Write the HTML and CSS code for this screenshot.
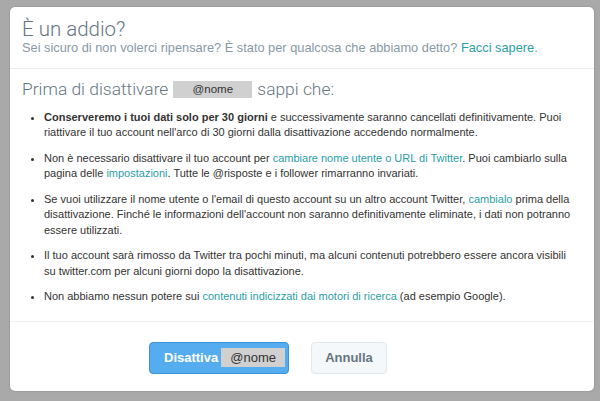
FILE: index.html
```html
<!DOCTYPE html>
<html lang="it">
<head>
<meta charset="utf-8">
<link rel="stylesheet" href="styles.css">
</head>
<body>
<div class="modal">
  <div class="header">
    <h1 class="title">È un addio?</h1>
    <p class="subtitle">Sei sicuro di non volerci ripensare? È stato per qualcosa che abbiamo detto? <a class="link">Facci sapere</a>.</p>
  </div>
  <div class="content">
    <h2 class="heading">Prima di disattivare <span class="namebox">@nome</span> sappi che:</h2>
    <ul class="list">
      <li><b>Conserveremo i tuoi dati solo per 30 giorni</b> e successivamente saranno cancellati definitivamente. Puoi riattivare il tuo account nell'arco di 30 giorni dalla disattivazione accedendo normalmente.</li>
      <li>Non è necessario disattivare il tuo account per <a class="link">cambiare nome utente o URL di Twitter</a>. Puoi cambiarlo sulla pagina delle <a class="link">impostazioni</a>. Tutte le @risposte e i follower rimarranno invariati.</li>
      <li>Se vuoi utilizzare il nome utente o l'email di questo account su un altro account Twitter, <a class="link">cambialo</a> prima della disattivazione. Finché le informazioni dell'account non saranno definitivamente eliminate, i dati non potranno essere utilizzati.</li>
      <li>Il tuo account sarà rimosso da Twitter tra pochi minuti, ma alcuni contenuti potrebbero essere ancora visibili su twitter.com per alcuni giorni dopo la disattivazione.</li>
      <li>Non abbiamo nessun potere sui <a class="link">contenuti indicizzati dai motori di ricerca</a> (ad esempio Google).</li>
    </ul>
  </div>
  <div class="footer">
    <button class="btn btn-primary">Disattiva <span class="btn-name">@nome</span></button>
    <button class="btn btn-secondary">Annulla</button>
  </div>
</div>
</body>
</html>
```

FILE: styles.css
```css
html, body {
  margin: 0;
  padding: 0;
}
body {
  background: #a9a9a9;
  width: 600px;
  height: 401px;
  overflow: hidden;
  padding: 7px 6px 0 10px;
  box-sizing: border-box;
  font-family: "Liberation Sans", Arial, sans-serif;
}
.modal {
  width: 584px;
  height: 384px;
  background: #fff;
  border-radius: 5px;
  box-shadow: 0 0 2px rgba(0,0,0,0.25);
  display: flex;
  flex-direction: column;
}
.header {
  height: 62px;
  box-sizing: border-box;
  padding: 11px 12px 0 12px;
  border-bottom: 1px solid #e8edf0;
}
.title {
  margin: 0;
  font-family: Roboto, "Liberation Sans", sans-serif;
  font-weight: 300;
  font-size: 20.5px;
  line-height: 22px;
  color: #66757f;
}
.subtitle {
  margin: 0;
  font-size: 12.8px;
  line-height: 16px;
  color: #8899a6;
}
.link {
  color: #2b9ea6;
  text-decoration: none;
}
.content {
  flex: 1;
  padding: 9px 12px 0 12px;
  border-bottom: 1px solid #eef1f3;
}
.heading {
  margin: 0;
  font-family: Roboto, "Liberation Sans", sans-serif;
  font-weight: 300;
  font-size: 17.4px;
  line-height: 22px;
  color: #66757f;
  display: flex;
  align-items: center;
}
.namebox {
  display: inline-block;
  background: #d0d0d0;
  color: #333;
  font-family: "Liberation Sans", Arial, sans-serif;
  font-weight: 400;
  font-size: 11.5px;
  width: 79px;
  height: 17px;
  line-height: 17px;
  text-align: center;
  margin: 0 5px;
}
.list {
  margin: 9.5px 0 0 0;
  padding: 0 4px 0 22px;
  font-size: 11px;
  line-height: 15.5px;
  color: #333;
}
.list li {
  margin-bottom: 10px;
}
.footer {
  height: 69px;
  box-sizing: border-box;
  display: flex;
  align-items: center;
  padding: 2px 0 0 139px;
  gap: 22px;
}
.btn {
  height: 32px;
  border-radius: 4px;
  font-family: "Liberation Sans", Arial, sans-serif;
  font-weight: 700;
  font-size: 13px;
  box-sizing: border-box;
  padding: 0;
  display: flex;
  align-items: center;
}
.btn-primary {
  width: 140px;
  background: #55acee;
  border: 1px solid #3b94d9;
  color: #fff;
  padding-left: 14px;
  gap: 3px;
}
.btn-name {
  display: inline-block;
  background: #d0d0d0;
  color: #333;
  font-weight: 400;
  width: 64px;
  height: 19px;
  line-height: 19px;
  text-align: center;
}
.btn-secondary {
  width: 76px;
  background: #f5f8fa;
  border: 1px solid #e1e8ed;
  color: #66757f;
  justify-content: center;
}
```
